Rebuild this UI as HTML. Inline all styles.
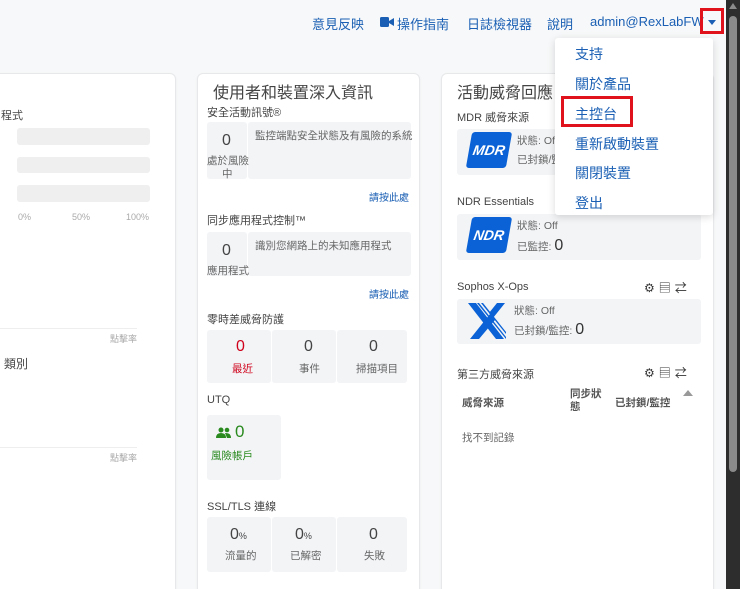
<!DOCTYPE html>
<html style="height:589px;overflow:hidden"><head><meta charset="utf-8"><style>
*{margin:0;padding:0;box-sizing:border-box}
body{width:740px;height:589px;overflow:hidden;background:#f7f8f9;font-family:"Liberation Sans","Noto Sans CJK TC",sans-serif;position:relative;color:#333}
.a{position:absolute;white-space:nowrap}
.nav{color:#1a5fb4;font-size:13px;top:14px}
.card{position:absolute;background:#fff;border:1px solid #e6e8ea;border-radius:6px;top:73px;height:540px;box-shadow:0 1px 2px rgba(0,0,0,.05);overflow:hidden}
.h{font-size:16px;color:#444}
.s{font-size:11px;color:#444}
.box{position:absolute;background:#f2f4f6;border-radius:3px}
.g{font-size:10.5px;color:#666}
.num{font-size:16px;color:#444}
.lnk{font-size:10px;color:#1a5fb4}
.mi{position:absolute;left:20px;font-size:14px;color:#1a5fb4}
.ic{font-size:12px;color:#333;letter-spacing:4px}
</style></head><body>
<div class="a nav" style="left:312px">意見反映</div>
<svg class="a" style="left:380px;top:17px" width="14" height="10"><rect x="0" y="0" width="9" height="10" rx="1.5" fill="#1a5fb4"/><path d="M9 4 L14 1 V9 L9 6Z" fill="#1a5fb4"/></svg>
<div class="a nav" style="left:397px">操作指南</div>
<div class="a nav" style="left:467px">日誌檢視器</div>
<div class="a nav" style="left:547px">說明</div>
<div class="a nav" style="left:590px">admin@RexLabFW</div>

<div class="card" style="left:-10px;width:186px">
 <div class="a s" style="left:10px;top:33px">程式</div>
 <div class="box" style="left:26px;top:54px;width:133px;height:17px;background:#efefef"></div>
 <div class="box" style="left:26px;top:83px;width:133px;height:16px;background:#efefef"></div>
 <div class="box" style="left:26px;top:111px;width:133px;height:17px;background:#efefef"></div>
 <div class="a" style="left:27px;top:138px;font-size:9px;color:#aaa">0%</div>
 <div class="a" style="left:81px;top:138px;font-size:9px;color:#aaa">50%</div>
 <div class="a" style="left:135px;top:138px;font-size:9px;color:#aaa">100%</div>
 <div class="a" style="left:0;top:254px;width:146px;border-top:1px solid #eee"></div>
 <div class="a" style="left:119px;top:258px;font-size:9px;color:#aaa">點擊率</div>
 <div class="a s" style="left:13px;top:281px;font-size:12px">類別</div>
 <div class="a" style="left:0;top:373px;width:146px;border-top:1px solid #eee"></div>
 <div class="a" style="left:119px;top:377px;font-size:9px;color:#aaa">點擊率</div>
</div>

<div class="card" style="left:197px;width:223px">
 <div class="a h" style="left:15px;top:5px">使用者和裝置深入資訊</div>
 <div class="a s" style="left:9px;top:30px">安全活動訊號®</div>
 <div class="box" style="left:9px;top:48px;width:40px;height:57px"></div>
 <div class="box" style="left:50px;top:48px;width:163px;height:57px"></div>
 <div class="a num" style="left:24px;top:58px">0</div>
 <div class="a g" style="left:9px;top:79px">處於風險</div>
 <div class="a g" style="left:24px;top:92px">中</div>
 <div class="a g" style="left:57px;top:54px">監控端點安全狀態及有風險的系統</div>
 <div class="a lnk" style="left:171px;top:115px">請按此處</div>
 <div class="a s" style="left:9px;top:138px">同步應用程式控制™</div>
 <div class="box" style="left:9px;top:158px;width:40px;height:44px"></div>
 <div class="box" style="left:50px;top:158px;width:163px;height:44px"></div>
 <div class="a num" style="left:24px;top:168px">0</div>
 <div class="a g" style="left:9px;top:189px">應用程式</div>
 <div class="a g" style="left:57px;top:164px">識別您網路上的未知應用程式</div>
 <div class="a lnk" style="left:171px;top:212px">請按此處</div>
 <div class="a s" style="left:9px;top:237px">零時差威脅防護</div>
 <div class="box" style="left:9px;top:256px;width:64px;height:53px"></div>
 <div class="box" style="left:74px;top:256px;width:64px;height:53px"></div>
 <div class="box" style="left:139px;top:256px;width:70px;height:53px"></div>
 <div class="a num" style="left:38px;top:264px;color:#d0021b">0</div>
 <div class="a g" style="left:34px;top:287px;color:#d0021b">最近</div>
 <div class="a num" style="left:106px;top:264px">0</div>
 <div class="a g" style="left:101px;top:287px">事件</div>
 <div class="a num" style="left:171px;top:264px">0</div>
 <div class="a g" style="left:158px;top:287px">掃描項目</div>
 <div class="a s" style="left:9px;top:320px">UTQ</div>
 <div class="box" style="left:9px;top:341px;width:74px;height:65px"></div>
 <svg class="a" style="left:18px;top:353px" width="16" height="12"><circle cx="5" cy="3" r="2.5" fill="#2a8a1f"/><path d="M0 11 Q0 6 5 6 Q10 6 10 11Z" fill="#2a8a1f"/><circle cx="11" cy="3" r="2.3" fill="#2a8a1f"/><path d="M9 6 Q15 5.5 15 11 H11Z" fill="#2a8a1f"/></svg>
 <div class="a" style="left:37px;top:348px;color:#2a8a1f;font-size:17px">0</div>
 <div class="a g" style="left:13px;top:374px;color:#2a8a1f">風險帳戶</div>
 <div class="a s" style="left:9px;top:424px">SSL/TLS 連線</div>
 <div class="box" style="left:9px;top:443px;width:64px;height:55px"></div>
 <div class="box" style="left:74px;top:443px;width:64px;height:55px"></div>
 <div class="box" style="left:139px;top:443px;width:70px;height:55px"></div>
 <div class="a num" style="left:32px;top:452px">0<span style="font-size:9px">%</span></div>
 <div class="a g" style="left:27px;top:474px">流量的</div>
 <div class="a num" style="left:97px;top:452px">0<span style="font-size:9px">%</span></div>
 <div class="a g" style="left:92px;top:474px">已解密</div>
 <div class="a num" style="left:171px;top:452px">0</div>
 <div class="a g" style="left:166px;top:474px">失敗</div>
</div>

<div class="card" style="left:441px;width:273px">
 <div class="a h" style="left:15px;top:5px">活動威脅回應</div>
 <div class="a s" style="left:15px;top:35px">MDR 威脅來源</div>
 <div class="box" style="left:15px;top:55px;width:244px;height:46px"></div>
 <div class="a" style="left:27px;top:58px;width:40px;height:36px;background:#0b62d6;transform:skewX(-10deg);border-radius:3px;color:#fff;font-weight:bold;font-style:italic;font-size:14px;line-height:36px;text-align:center">MDR</div>
 <div class="a g" style="left:75px;top:59px">狀態: Off</div>
 <div class="a g" style="left:75px;top:78px">已封鎖/監</div>
 <div class="a s" style="left:15px;top:122px">NDR Essentials</div>
 <div class="box" style="left:15px;top:140px;width:244px;height:46px"></div>
 <div class="a" style="left:27px;top:143px;width:40px;height:36px;background:#0b62d6;transform:skewX(-10deg);border-radius:3px;color:#fff;font-weight:bold;font-style:italic;font-size:14px;line-height:36px;text-align:center">NDR</div>
 <div class="a g" style="left:75px;top:144px">狀態: Off</div>
 <div class="a g" style="left:75px;top:163px">已監控: <span style="font-size:16px;color:#333">0</span></div>
 <div class="a s" style="left:15px;top:207px">Sophos X-Ops</div>
 <div class="a ic" style="left:202px;top:205px">⚙▤⇄</div>
 <div class="box" style="left:15px;top:225px;width:244px;height:45px"></div>
 <svg class="a" style="left:26px;top:229px" width="38" height="38"><path d="M0 0 H8 L36 36 H28Z" fill="#0b62d6"/><path d="M9 0 H11 L38 34 V36 Z" fill="#0b62d6"/><path d="M13 0 H15 L38 29 V31Z" fill="#0b62d6"/><path d="M2 36 L22 11 L27 17 L11 36Z M29 0 H37 L25 15 L21 10Z" fill="#0b62d6"/></svg>
 <div class="a g" style="left:72px;top:229px">狀態: Off</div>
 <div class="a g" style="left:72px;top:247px">已封鎖/監控: <span style="font-size:16px;color:#333">0</span></div>
 <div class="a s" style="left:15px;top:292px">第三方威脅來源</div>
 <div class="a ic" style="left:202px;top:290px">⚙▤⇄</div>
 <div class="a" style="left:241px;top:316px;width:0;height:0;border-left:5px solid transparent;border-right:5px solid transparent;border-bottom:6px solid #999"></div>
 <div class="a g" style="left:20px;top:321px;font-weight:bold;color:#555">威脅來源</div>
 <div class="a g" style="left:128px;top:314px;font-weight:bold;color:#555;white-space:normal;width:34px;line-height:13px">同步狀態</div>
 <div class="a g" style="left:173px;top:321px;font-weight:bold;color:#555">已封鎖/監控</div>
 <div class="a g" style="left:20px;top:356px">找不到記錄</div>
</div>

<div class="a" style="left:555px;top:38px;width:158px;height:177px;background:#fff;border-radius:3px;box-shadow:0 2px 8px rgba(0,0,0,.15)">
 <div class="mi" style="top:6px">支持</div>
 <div class="mi" style="top:36px">關於產品</div>
 <div class="mi" style="top:66px">主控台</div>
 <div class="mi" style="top:96px">重新啟動裝置</div>
 <div class="mi" style="top:125px">關閉裝置</div>
 <div class="mi" style="top:155px">登出</div>
</div>
<div class="a" style="left:561px;top:96px;width:72px;height:31px;border:3px solid #e0121b"></div>
<div class="a" style="left:700px;top:8px;width:24px;height:26px;border:3px solid #e0121b"></div>
<div class="a" style="left:708px;top:20px;width:0;height:0;border-left:4px solid transparent;border-right:4px solid transparent;border-top:5px solid #1a5fb4"></div>
<div class="a" style="left:726px;top:0;width:14px;height:589px;background:#2d2d2d"></div>
<div class="a" style="left:729px;top:16px;width:8px;height:456px;background:#8a8a8a;border-radius:4px"></div>
<div class="a" style="left:729px;top:3px;width:0;height:0;border-left:4px solid transparent;border-right:4px solid transparent;border-bottom:6px solid #8a8a8a"></div>
</body></html>
